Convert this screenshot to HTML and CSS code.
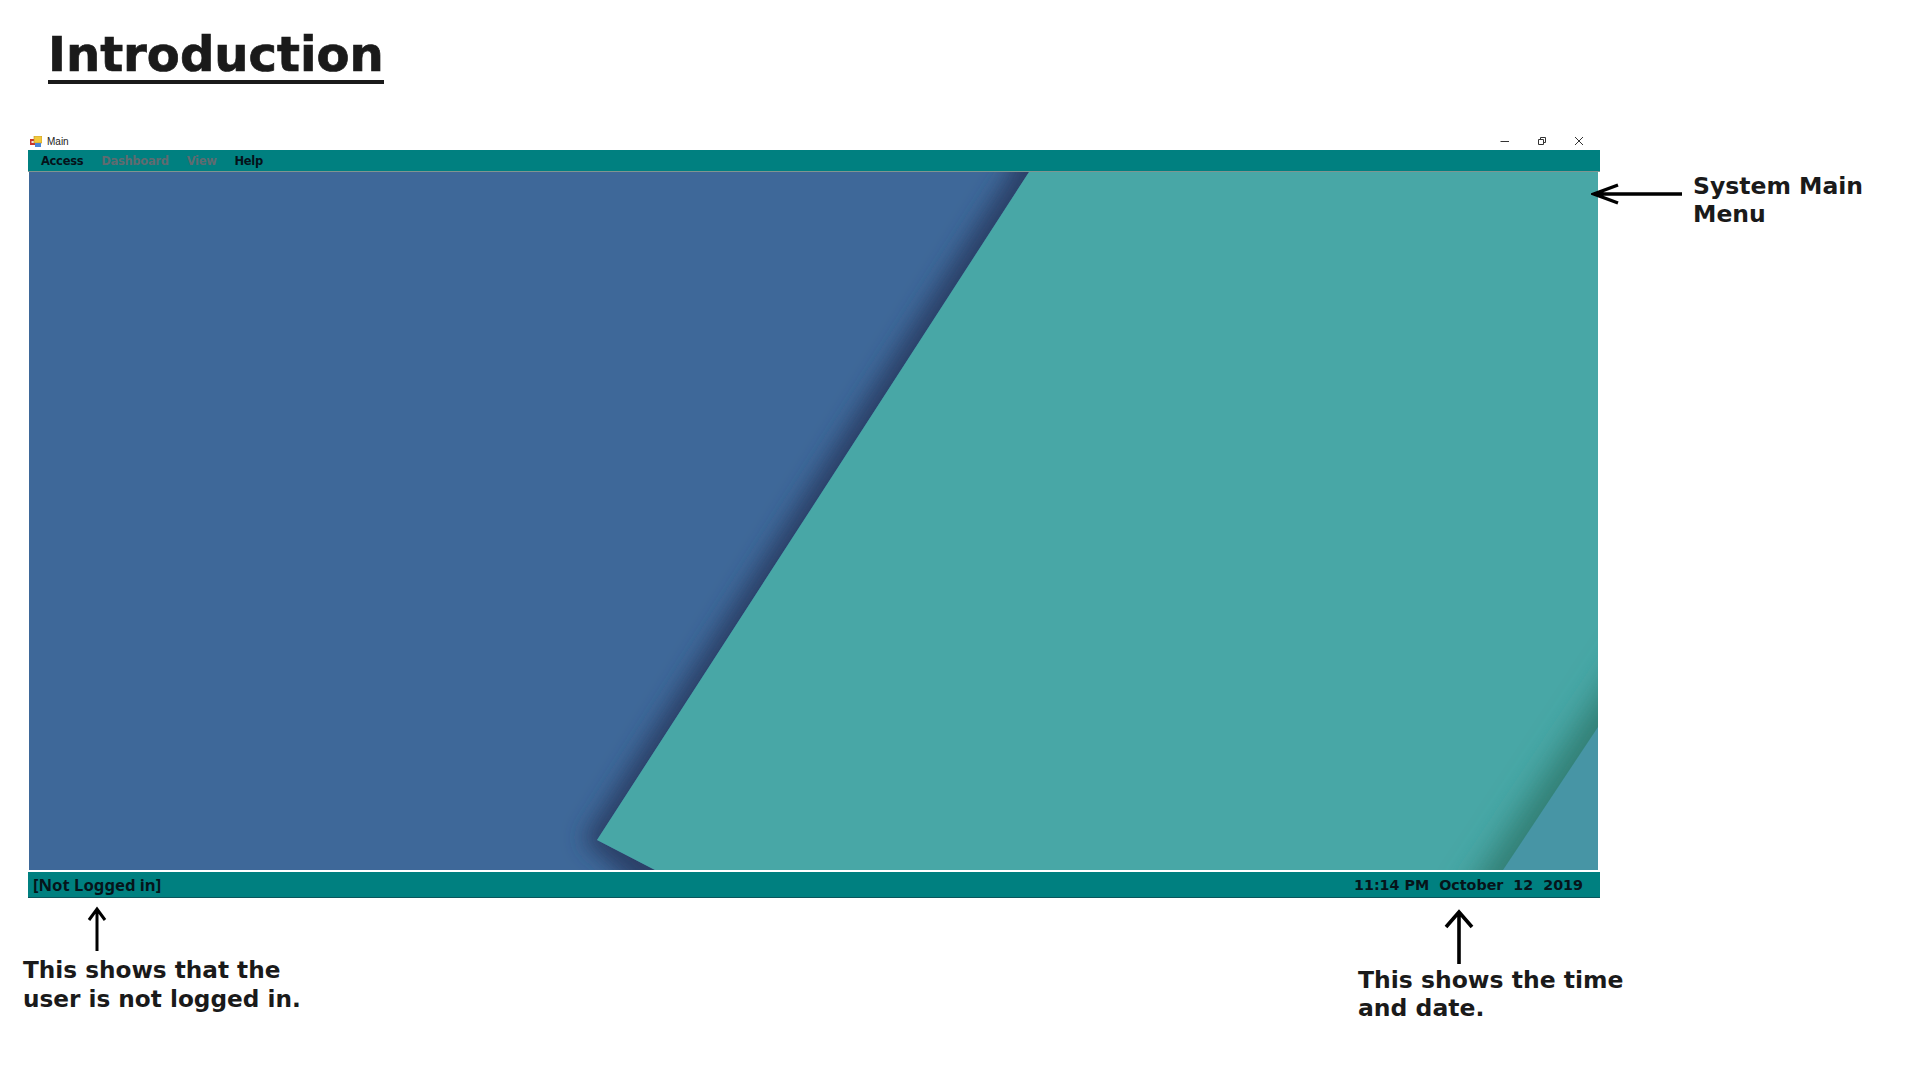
FILE: index.html
```html
<!DOCTYPE html>
<html lang="en">
<head>
<meta charset="utf-8">
<title>Introduction</title>
<link rel="stylesheet" href="styles.css">
</head>
<body>
<main class="page">
  <header class="heading"><h1 class="heading-text">Introduction</h1></header>
  <section class="main-row">
    <div class="window">
      <div class="titlebar">
        <div class="title-left">
          <svg class="app-icon" width="12" height="11" viewBox="0 0 12 11"><rect x="0" y="3" width="6" height="6" fill="#c8352c"/><rect x="1.5" y="5" width="3" height="2" fill="#f3e3d8"/><rect x="4" y="0" width="8" height="7" fill="#f2c83c" stroke="#b9902a" stroke-width=".6"/><rect x="5" y="7" width="6" height="4" fill="#4a86d8"/></svg>
          <span class="title-text">Main</span>
        </div>
        <div class="title-controls">
          <svg width="10" height="10" viewBox="0 0 10 10"><path d="M0.5 5.5H9" stroke="#333" stroke-width="1"/></svg>
          <svg width="10" height="10" viewBox="0 0 10 10"><path d="M1.5 3.5H6.5V8.5H1.5ZM3.5 3.5V1.5H8.5V6.5H6.5" fill="none" stroke="#333" stroke-width="1"/></svg>
          <svg width="10" height="10" viewBox="0 0 10 10"><path d="M1 1L9 9M9 1L1 9" stroke="#333" stroke-width="1"/></svg>
        </div>
      </div>
      <nav class="menubar">
        <span class="menu-item">Access</span>
        <span class="menu-item is-disabled">Dashboard</span>
        <span class="menu-item is-disabled">View</span>
        <span class="menu-item">Help</span>
      </nav>
      <div class="canvas">
        <svg class="wallpaper" width="1569" height="698" viewBox="0 0 1569 698" preserveAspectRatio="none">
          <defs>
            <filter id="soft" x="-20%" y="-20%" width="140%" height="140%"><feGaussianBlur stdDeviation="11"/></filter>
            <filter id="soft-wide" x="-60%" y="-60%" width="220%" height="220%"><feGaussianBlur stdDeviation="15"/></filter>
            <clipPath id="teal-clip"><path d="M1000 0H1569V698H626L568 668Z"/></clipPath>
            <clipPath id="blue-clip"><path d="M0 0H1000L568 668L626 698H0Z"/></clipPath>
          </defs>
          <rect width="1569" height="698" fill="#3e6899"/>
          <g clip-path="url(#blue-clip)">
            <path d="M990 -60L982 0L554 668L620 725L1120 725V-60Z" fill="#2b4068" filter="url(#soft)"/>
          </g>
          <path d="M1000 0H1569V698H626L568 668Z" fill="#48a7a6"/>
          <g clip-path="url(#teal-clip)">
            <path d="M1432 730L1624 440V730Z" fill="#337f74" filter="url(#soft-wide)"/>
          </g>
          <path d="M1474 698L1569 555V698Z" fill="#4795a5"/>
        </svg>
      </div>
      <div class="statusbar">
        <span class="status-text">[Not Logged in]</span>
        <span class="status-text status-time">11:14 PM&nbsp; October&nbsp; 12&nbsp; 2019</span>
      </div>
    </div>
    <aside class="side-note">
      <svg class="arrow" width="94" height="24" viewBox="0 0 94 24"><path d="M91 12H3M27 3L3 12L27 21" fill="none" stroke="#000" stroke-width="3.4"/></svg>
      <p class="note-text">System Main<br>Menu</p>
    </aside>
  </section>
  <section class="notes">
    <div class="note note-left">
      <svg class="arrow note-arrow-left" width="20" height="46" viewBox="0 0 20 46"><path d="M10 45V3M2 14L10 3L18 14" fill="none" stroke="#000" stroke-width="3"/></svg>
      <p class="note-text">This shows that the<br>user is not logged in.</p>
    </div>
    <div class="note note-right">
      <svg class="arrow note-arrow-right" width="30" height="56" viewBox="0 0 30 56"><path d="M15 55V3M2 18L15 3L28 18" fill="none" stroke="#000" stroke-width="3.6"/></svg>
      <p class="note-text">This shows the time<br>and date.</p>
    </div>
  </section>
</main>
</body>
</html>
```
FILE: styles.css
```css
* { box-sizing: border-box; }
html, body { margin: 0; padding: 0; background: #fff; }
body { width: 1920px; height: 1080px; overflow: hidden; font-family: "DejaVu Sans", sans-serif; }
.page { display: flex; flex-direction: column; }
.heading { padding: 28px 0 0 48px; height: 135px; }
.heading-text {
  display: inline-block;
  margin: 0;
  font-size: 48.1px;
  line-height: 52px;
  font-weight: 700;
  color: #1a1a1a;
  border-bottom: 4px solid #1a1a1a;
  -webkit-text-stroke: 0.7px #1a1a1a;
}
.main-row { display: flex; padding-left: 28px; }
.window { width: 1572px; display: flex; flex-direction: column; }
.titlebar { height: 15px; padding-bottom: 3px; display: flex; justify-content: space-between; align-items: center; }
.title-left { display: flex; align-items: center; gap: 5px; padding-left: 2px; }
.title-text { font: 400 10px/13px "Liberation Sans", sans-serif; color: #222; }
.title-controls { display: flex; gap: 27px; padding-right: 16px; }
.menubar {
  height: 22px;
  background: #008080;
  border-bottom: 1px solid #7f9590;
  display: flex;
  align-items: center;
  gap: 18px;
  padding-left: 13px;
}
.menu-item { font: 700 11.5px/20px "DejaVu Sans", sans-serif; color: #05121a; letter-spacing: -0.3px; }
.menu-item.is-disabled { color: #5f6b70; }
.canvas { height: 698px; margin-left: 1px; margin-right: 2px; background: #3e6899; }
.wallpaper { display: block; }
.statusbar {
  margin-top: 2px;
  height: 26px;
  background: #008080;
  border-bottom: 1px solid #0b565c;
  display: flex;
  justify-content: space-between;
  align-items: center;
  padding: 0 17px 0 5px;
}
.status-text { font: 700 16.7px/22px "Noto Sans", sans-serif; color: #06141a; }
.status-time { font-family: "DejaVu Sans", sans-serif; font-size: 14.3px; }
.side-note { display: flex; align-items: flex-start; gap: 8px; padding-top: 37px; margin-left: -9px; }
.note-text { margin: 0; font-weight: 700; font-size: 23.5px; line-height: 28px; color: #1a1a1a; white-space: nowrap; }
.side-note .arrow { margin-top: 10px; }
.arrow { display: block; flex: none; }
.notes { display: grid; grid-template-columns: 1335px 1fr; padding-left: 23px; }
.note { display: flex; flex-direction: column; }
.note-arrow-left { margin: 8px 0 0 64px; }
.note-arrow-right { margin: 11px 0 0 86px; }
.note-left .note-text { margin-top: 3px; font-size: 23.2px; line-height: 29px; }
.note-right .note-text { margin-top: 1px; }
```
